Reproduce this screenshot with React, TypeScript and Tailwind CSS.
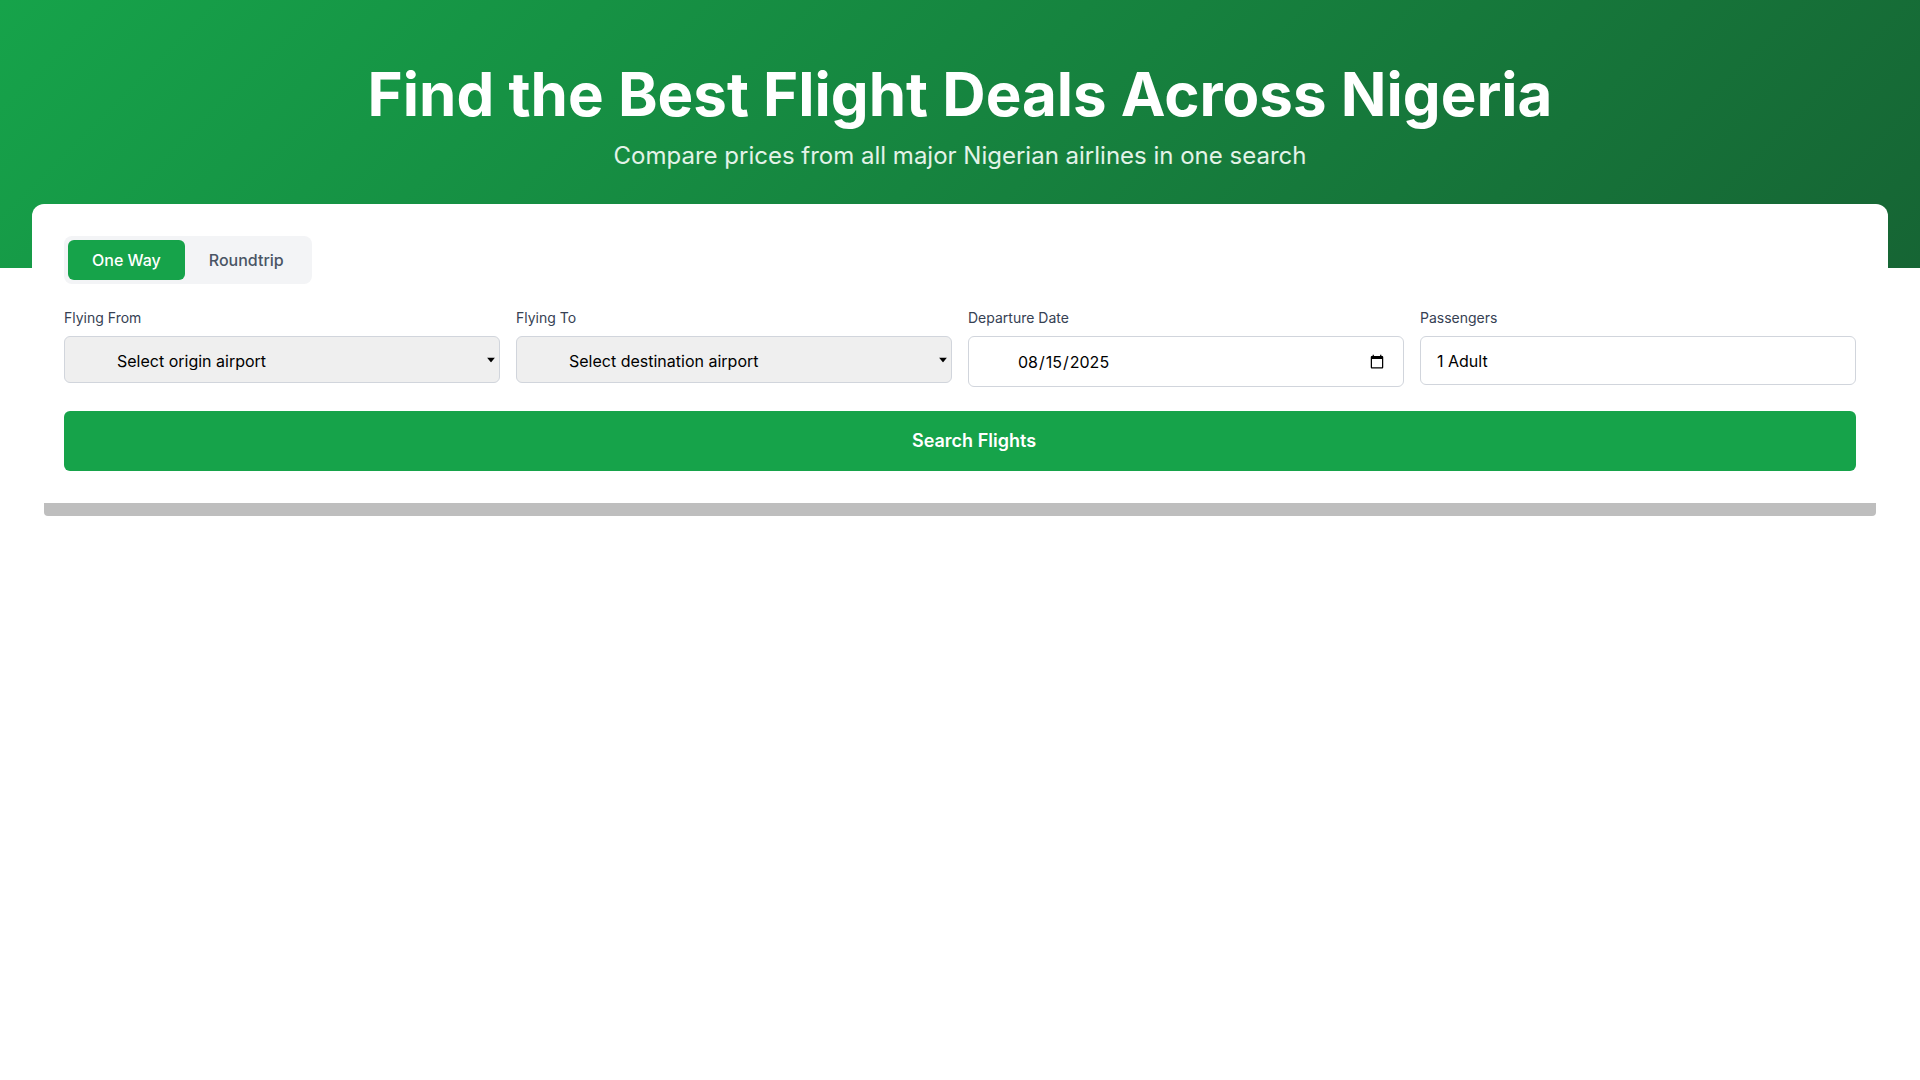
import React from "react";

function Arrow() {
  return (
    <svg className="pointer-events-none absolute right-[5px] top-1/2 -translate-y-1/2" width="8" height="5" viewBox="0 0 8 5">
      <path d="M0 0h8L4 5z" fill="#000" />
    </svg>
  );
}

export default function App() {
  return (
    <div className="min-h-screen bg-white font-['Inter',sans-serif] text-black">
      <header className="h-[268px] bg-[linear-gradient(135deg,#16a34a,#166534)] pt-16 text-center text-white">
        <h1 className="mb-4 text-6xl font-bold leading-none">Find the Best Flight Deals Across Nigeria</h1>
        <p className="text-2xl font-normal text-[#e3f3e8]">Compare prices from all major Nigerian airlines in one search</p>
      </header>
      <main className="relative mx-8 -mt-16">
        <div className="rounded-t-xl bg-white p-8">
          <div className="mb-6 inline-flex rounded-lg bg-gray-100 p-1">
            <button className="rounded-md bg-[#16a34a] px-6 py-2 text-base font-medium text-white">One Way</button>
            <button className="rounded-md px-6 py-2 text-base font-medium text-gray-600">Roundtrip</button>
          </div>
          <div className="mb-6 grid grid-cols-4 items-start gap-4">
            <div>
              <label className="mb-2 block text-sm font-normal text-gray-700">Flying From</label>
              <div className="relative">
                <select className="h-[47px] w-full appearance-none rounded-md border border-gray-300 bg-[#efefef] py-3 pl-[52px] pr-4 text-base text-black" defaultValue="">
                  <option value="">Select origin airport</option>
                </select>
                <Arrow />
              </div>
            </div>
            <div>
              <label className="mb-2 block text-sm font-normal text-gray-700">Flying To</label>
              <div className="relative">
                <select className="h-[47px] w-full appearance-none rounded-md border border-gray-300 bg-[#efefef] py-3 pl-[52px] pr-4 text-base text-black" defaultValue="">
                  <option value="">Select destination airport</option>
                </select>
                <Arrow />
              </div>
            </div>
            <div>
              <label className="mb-2 block text-sm font-normal text-gray-700">Departure Date</label>
              <input type="date" defaultValue="2025-08-15" className="h-[51px] w-full rounded-md border border-gray-300 bg-white py-3 pl-12 pr-4 text-base text-black" />
            </div>
            <div>
              <label className="mb-2 block text-sm font-normal text-gray-700">Passengers</label>
              <input type="text" readOnly value="1 Adult" className="h-[49px] w-full rounded-md border border-gray-300 bg-white px-4 py-3 text-base text-black" />
            </div>
          </div>
          <button className="w-full rounded-md bg-[#16a34a] py-4 pl-7 text-lg font-semibold text-white">Search Flights</button>
        </div>
        <div className="mx-3 h-[13px] rounded-b bg-[#bebebe]" />
      </main>
    </div>
  );
}
